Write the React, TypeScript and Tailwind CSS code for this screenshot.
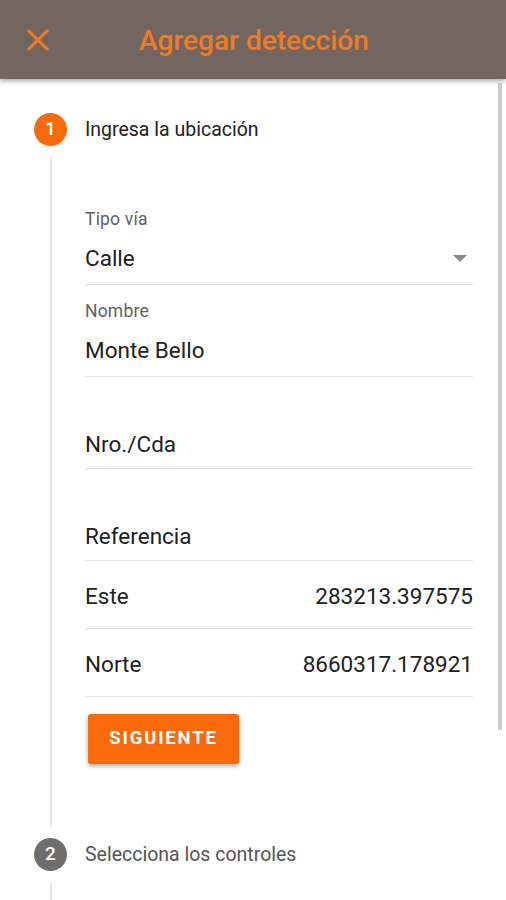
import React from "react";

function Field({ label, value, arrow }: { label?: string; value: string; arrow?: boolean }) {
  return (
    <div className="flex h-[92px] flex-col border-b border-[#e0e0e0] pt-[14px]">
      <div className="h-[24px] text-[17.5px] leading-[24px] tracking-[0.2px] text-[#5f5f5f]">{label ?? ""}</div>
      <div className={`flex h-[40px] items-center justify-between ${label ? "mt-[8px]" : "mt-[10px]"}`}>
        <span className="text-[22.5px] text-[#212121]">{value}</span>
        {arrow && (
          <svg width="14" height="8" viewBox="0 0 14 8" className="mr-[6px]">
            <path d="M0 0 L14 0 L7 7 Z" fill="#8a8a8a" />
          </svg>
        )}
      </div>
    </div>
  );
}

function Row({ label, value }: { label: string; value: string }) {
  return (
    <div className="flex h-[68px] items-center justify-between border-b border-[#e0e0e0] pt-[5px]">
      <span className="text-[22.5px] text-[#212121]">{label}</span>
      <span className="text-[22.5px] text-[#212121]">{value}</span>
    </div>
  );
}

export default function App() {
  return (
    <div className="relative h-[900px] w-[506px] overflow-hidden bg-white" style={{ fontFamily: "Roboto, 'Noto Sans', sans-serif" }}>
      <header className="relative z-10 flex h-[79px] items-center bg-[#736660] shadow-[0_2px_5px_rgba(0,0,0,0.35)]">
        <div className="flex w-[76px] justify-center">
          <svg width="22" height="22" viewBox="0 0 22 22">
            <path d="M2 2 L20 20 M20 2 L2 20" stroke="#f47a20" strokeWidth="3" strokeLinecap="square" />
          </svg>
        </div>
        <h1 className="ml-[63px] mt-[2px] text-[28px] font-medium text-[#f47a20]">Agregar detección</h1>
      </header>

      <div className="absolute right-[4px] top-[83px] h-[647px] w-[4px] bg-[#cccccc]" />

      <main className="flex flex-col">
        <div className="mt-[34px] flex h-[33px] items-center">
          <div className="ml-[34px] flex h-[33px] w-[33px] items-center justify-center rounded-full bg-[#fa6a0a] text-[19px] font-medium text-white">1</div>
          <span className="ml-[18px] text-[19.5px] text-[#212121]">Ingresa la ubicación</span>
        </div>

        <div className="ml-[50px] mt-[12px] flex w-[423px] border-l-2 border-[#e6e6e6]">
          <div className="ml-[33px] flex w-[388px] flex-col pt-[35px]">
            <Field label="Tipo vía" value="Calle" arrow />
            <Field label="Nombre" value="Monte Bello" />
            <Field value="Nro./Cda" />
            <Field value="Referencia" />
            <Row label="Este" value="283213.397575" />
            <Row label="Norte" value="8660317.178921" />
            <button className="mt-[17px] ml-[3px] h-[50px] w-[151px] rounded-[3px] bg-[#fa6a0a] text-[18.5px] font-bold tracking-[1.8px] text-white shadow-[0_2px_4px_rgba(0,0,0,0.35)]">
              SIGUIENTE
            </button>
            <div className="h-[62px]" />
          </div>
        </div>

        <div className="mt-[12px] flex h-[33px] items-center">
          <div className="ml-[34px] flex h-[33px] w-[33px] items-center justify-center rounded-full bg-[#6e6e6e] text-[19px] font-medium text-white">2</div>
          <span className="ml-[18px] text-[19.5px] text-[#555]">Selecciona los controles</span>
        </div>
        <div className="ml-[50px] mt-[12px] h-[40px] w-[2px] bg-[#e6e6e6]" />
      </main>
    </div>
  );
}
